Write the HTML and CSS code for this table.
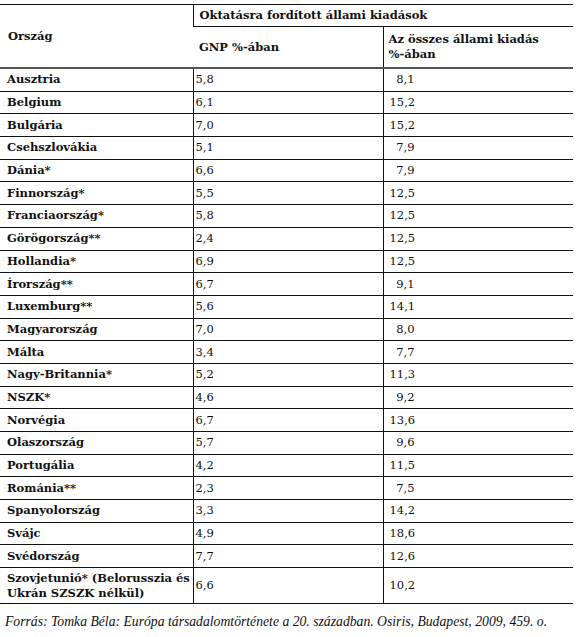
FILE: index.html
```html
<!DOCTYPE html>
<html lang="hu">

<head>
    <meta charset="UTF-8">
    <title>Oktatásra fordított állami kiadások</title>
    <link rel="stylesheet" href="styles.css">
</head>

<body>
    <table class="data">
        <colgroup>
            <col class="c1">
            <col class="c2">
            <col class="c3">
        </colgroup>
        <thead>
            <tr class="head-top">
                <th rowspan="2" class="col-country">Ország</th>
                <th colspan="2" class="head-group">Oktatásra fordított állami kiadások</th>
            </tr>
            <tr class="head-sub">
                <th class="col-gnp">GNP %-ában</th>
                <th class="col-total">Az összes állami kiadás<br>%-ában</th>
            </tr>
        </thead>
        <tbody id="rows">
            <!-- sorok a szkriptből -->
        </tbody>
    </table>

    <p class="source">Forrás: Tomka Béla: Európa társadalomtörténete a 20. században. Osiris, Budapest, 2009, 459. o.</p>

    <script>
        const data = [
            ["Ausztria", "5,8", "8,1"],
            ["Belgium", "6,1", "15,2"],
            ["Bulgária", "7,0", "15,2"],
            ["Csehszlovákia", "5,1", "7,9"],
            ["Dánia*", "6,6", "7,9"],
            ["Finnország*", "5,5", "12,5"],
            ["Franciaország*", "5,8", "12,5"],
            ["Görögország**", "2,4", "12,5"],
            ["Hollandia*", "6,9", "12,5"],
            ["Írország**", "6,7", "9,1"],
            ["Luxemburg**", "5,6", "14,1"],
            ["Magyarország", "7,0", "8,0"],
            ["Málta", "3,4", "7,7"],
            ["Nagy-Britannia*", "5,2", "11,3"],
            ["NSZK*", "4,6", "9,2"],
            ["Norvégia", "6,7", "13,6"],
            ["Olaszország", "5,7", "9,6"],
            ["Portugália", "4,2", "11,5"],
            ["Románia**", "2,3", "7,5"],
            ["Spanyolország", "3,3", "14,2"],
            ["Svájc", "4,9", "18,6"],
            ["Svédország", "7,7", "12,6"],
            ["Szovjetunió* (Belorusszia és Ukrán SZSZK nélkül)", "6,6", "10,2"]
        ];

        const body = document.getElementById("rows");
        data.forEach(row => {
            let tr = document.createElement("tr");
            if (row[0].length > 30) tr.className = "tall";
            tr.innerHTML = `
                <td class="country">${row[0]}</td>
                <td class="num">${row[1]}</td>
                <td class="num total"><span class="pad">${row[2]}</span></td>
            `;
            body.appendChild(tr);
        });
    </script>
</body>

</html>
```

FILE: styles.css
```css
body {
    margin: 0;
    padding: 4px 0 0 0;
    background: #fff;
    color: #111;
    font-family: "DejaVu Serif", serif;
}

.data {
    width: 573px;
    border-collapse: collapse;
    table-layout: fixed;
    font-size: 11.5px;
}

.c1 {
    width: 193px;
}

.c2 {
    width: 190px;
}

.c3 {
    width: 190px;
}

.data th,
.data td {
    border-top: 1px solid #111;
    border-bottom: 1px solid #111;
    border-left: 1px solid #111;
    text-align: left;
    padding: 0 6px;
    line-height: 15px;
}

.data th:first-child,
.data td:first-child {
    border-left: none;
}

.col-country {
    padding-left: 8px !important;
    border-bottom: 2px solid #555 !important;
}

.head-top th {
    height: 21px;
    vertical-align: middle;
}

.head-group {
    border-left: 1px solid #111;
}

.head-sub th {
    height: 40px;
    border-bottom: 2px solid #555;
}

.head-sub .col-total {
    padding-left: 5px;
}

.data td {
    height: 21.7px;
}

.data td.country {
    font-weight: bold;
    padding-left: 7px;
    padding-right: 0;
}

.data td.num {
    padding-left: 2px;
}

.data td.total {
    padding-left: 6px;
}

.data tr.tall td {
    height: 35px;
}

.pad {
    display: inline-block;
    width: 25px;
    text-align: right;
}

.source {
    margin: 10px 0 0 5px;
    font-family: "Liberation Serif", serif;
    font-style: italic;
    font-size: 13.7px;
}
```
